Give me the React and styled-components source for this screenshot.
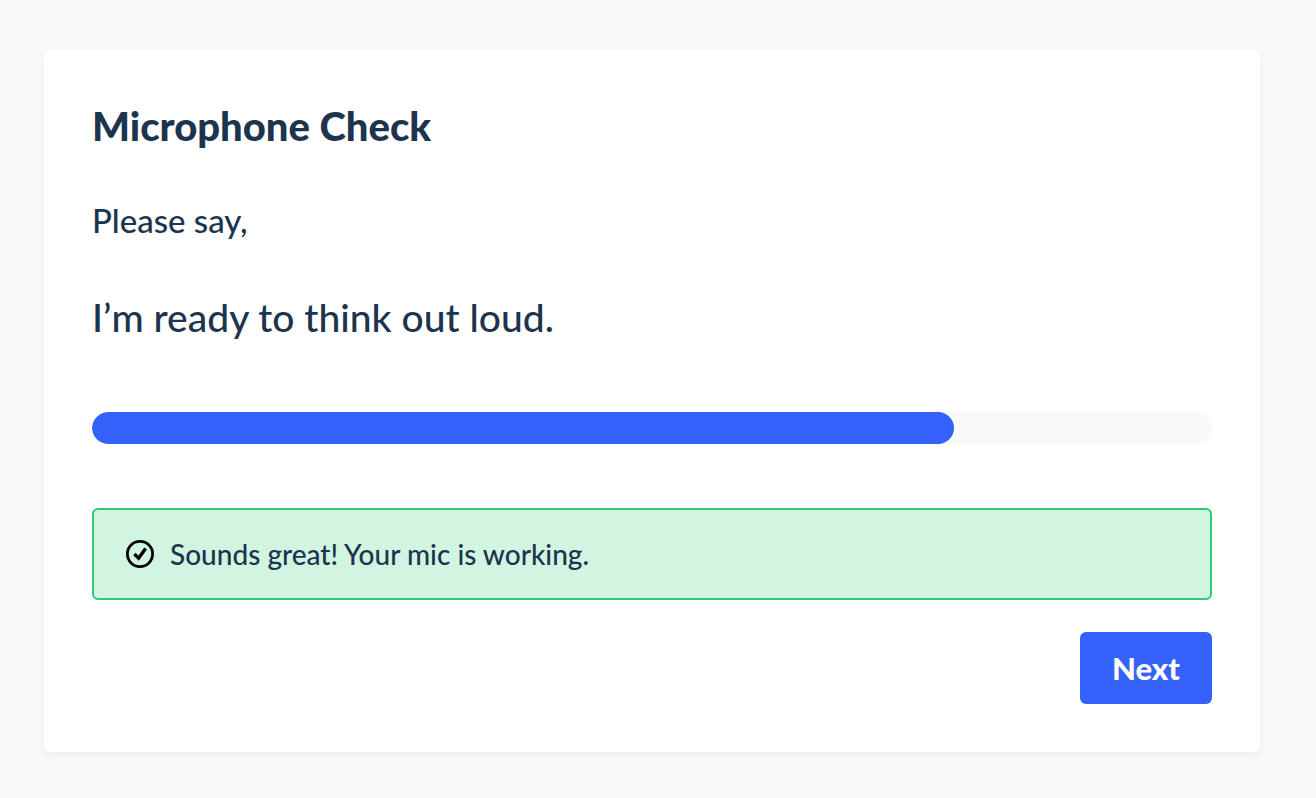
import React from "react";
import styled, { createGlobalStyle } from "styled-components";

const GlobalStyle = createGlobalStyle`
  * {
    box-sizing: border-box;
  }
  body {
    margin: 0;
    background: #f8f9fb;
    color: #1c344e;
    font-family: Lato, "Liberation Sans", sans-serif;
    font-weight: 500;
  }
`;

function CheckIcon() {
  return (
    <svg width="28" height="28" viewBox="0 0 28 28" fill="none" stroke="#000" aria-hidden="true">
      <circle cx="14" cy="14" r="12.6" strokeWidth="2.8" />
      <path d="M8.4 14 12.6 18.2 19.6 8.6" strokeWidth="3.4" />
    </svg>
  );
}

function App() {
  return (
    <>
      <GlobalStyle />
      <Page>
        <Card>
          <Title>Microphone Check</Title>
          <Prompt>Please say,</Prompt>
          <Phrase>I’m ready to think out loud.</Phrase>
          <Level value={77} max="100" aria-label="Microphone level" />
          <Notice role="status">
            <CheckIcon />
            <NoticeText>Sounds great! Your mic is working.</NoticeText>
          </Notice>
          <Actions>
            <NextButton type="button">Next</NextButton>
          </Actions>
        </Card>
      </Page>
    </>
  );
}

const Page = styled.main`
  padding: 50px 56px 46px 44px;
`;
const Card = styled.section`
  padding: 48px;
  background: #fff;
  border-radius: 6px;
  box-shadow: 0 4px 8px rgba(0, 0, 0, 0.05);
`;
const Title = styled.h1`
  margin: 0 0 48px;
  font-size: 40px;
  font-weight: 900;
  line-height: 56px;
`;
const Prompt = styled.p`
  margin: 0 0 48px;
  font-size: 33px;
  line-height: 36px;
`;
const Phrase = styled.p`
  margin: 0 0 64px;
  font-size: 39px;
  line-height: 62px;
`;
const Level = styled.progress`
  appearance: none;
  display: block;
  width: 100%;
  height: 32px;
  border: 0;
  border-radius: 16px;
  overflow: hidden;
  background: #f8f9fb;

  &::-webkit-progress-bar {
    background: #f8f9fb;
    border-radius: 16px;
  }
  &::-webkit-progress-value {
    background: #3361fa;
    border-radius: 16px;
  }
`;
const Notice = styled.div`
  display: flex;
  align-items: center;
  gap: 16px;
  margin-top: 64px;
  padding: 24px 32px;
  background: #d2f5e1;
  border: 2px solid #2dca73;
  border-radius: 6px;
`;
const NoticeText = styled.p`
  margin: 0;
  font-size: 28px;
  line-height: 40px;
`;
const Actions = styled.div`
  display: flex;
  justify-content: flex-end;
  margin-top: 32px;
`;
const NextButton = styled.button`
  padding: 16px 32px;
  border: 0;
  border-radius: 6px;
  background: #3361fa;
  color: #fff;
  font-family: inherit;
  font-size: 31px;
  font-weight: 900;
  line-height: 40px;
  cursor: pointer;
`;

export default App;
